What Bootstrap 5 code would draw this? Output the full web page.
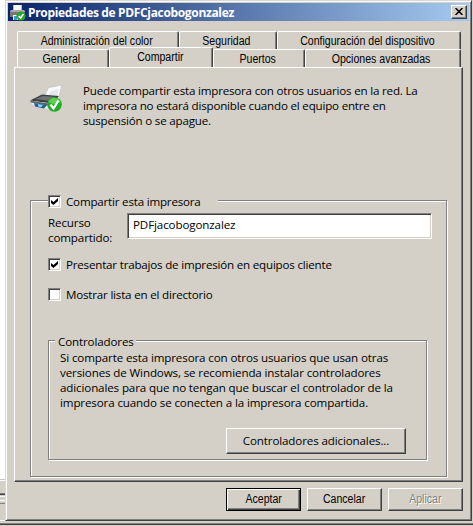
<!DOCTYPE html>
<html lang="es">
<head>
<meta charset="utf-8">
<title>Propiedades de PDFCjacobogonzalez</title>
<meta name="viewport" content="width=device-width, initial-scale=1">
<link href="https://cdn.jsdelivr.net/npm/bootstrap@5.3.0/dist/css/bootstrap.min.css" rel="stylesheet">
<style>
:root { --face:#d4d0c8; --shade:#808080; --dark:#404040; }
body { width:473px; height:526px; overflow:hidden; background:var(--face); color:#000;
  font:11.6px/15px "Open Sans","Noto Sans",sans-serif; }
.backdrop { width:5px; }
.backdrop .sheet { height:479px; background:#fff; }
.backdrop .rules { height:42px; background:linear-gradient(#c8c4bc 0 1px,#fff 1px 2px,var(--face) 2px 14px,var(--shade) 14px 15px,var(--dark) 15px 16px,var(--face) 16px 17px,#fff 17px 18px,var(--face) 18px 21px,#fff 21px 22px,var(--face) 22px 24px,var(--shade) 24px 25px,var(--face) 25px 41px,#fff 41px 42px); }
.floor { height:5px; background:linear-gradient(var(--face) 0 2px,var(--shade) 2px 3px,var(--dark) 3px 4px,var(--face) 4px); }
.dialog { width:467px; height:521px; background:var(--face); border:1px solid; border-color:#dcd8d0 var(--dark) var(--dark) #dcd8d0;
  box-shadow:inset 1px 1px #fff, inset -1px -1px var(--shade); padding:2px; }
.titlebar { height:18px; background:linear-gradient(90deg,#0a246a,#a6caf0); color:#fff; font-size:12px; font-weight:700; padding:0 2px 0 1px; }
.titlebar .caption { letter-spacing:-.34px; line-height:17px; margin-left:2px; }
.x-box { width:16px; height:14px; background:var(--face); border:1px solid; border-color:#fff var(--dark) var(--dark) #fff; box-shadow:inset -1px -1px var(--shade); }
.x-box svg { display:block; margin:2px 0 0 3px; }
.ms { font-family:"Liberation Sans",Arial,sans-serif; font-size:12px; }
.ms .narrow { display:inline-block; transform:scaleX(.88); white-space:nowrap; }
.strip { margin:10px 0 0 9px; width:444px; }
.tabitem { height:18px; padding:1px 3px 0 0; line-height:17px; display:flex; justify-content:center; border:1px solid; border-color:#fff var(--dark) transparent #fff; border-bottom:0; border-radius:2px 2px 0 0; box-shadow:inset -1px 0 var(--shade); background:var(--face); color:#000; }
.tabitem.chosen { height:20px; margin-top:-2px; padding-left:2px; }
.panel { width:449px; height:415px; margin-left:6px; border:1px solid; border-color:#fff var(--dark) var(--dark) #fff; box-shadow:inset -1px -1px var(--shade); padding:15px 0 0 15px; }
.intro { height:117px; }
.intro p { margin:0 0 0 20px; }
.etched { border:1px solid var(--shade); box-shadow:1px 1px #fff, inset 1px 1px #fff; }
.outer { width:417px; height:277px; padding-left:17px; }
.inner { width:379px; height:120px; margin-top:38px; padding-left:6px; }
.over { background:var(--face); width:max-content; }
.check { width:13px; height:13px; background:#fff; border:1px solid; border-color:var(--shade) #fff #fff var(--shade); box-shadow:inset 1px 1px var(--dark), inset -1px -1px var(--face); }
.check svg { display:block; margin:2px; }
.check + span { margin-left:5px; }
.field { width:305px; height:26px; background:#fff; border:1px solid; border-color:var(--shade) #fff #fff var(--shade); box-shadow:inset 1px 1px var(--dark), inset -1px -1px var(--face); padding:0 5px 4px; border-radius:0; font:inherit; color:#000; letter-spacing:-.12px; }
.t { letter-spacing:-.2px; white-space:nowrap; }
.t-wide { letter-spacing:-.13px; }
.push { border:1px solid; border-color:#fff var(--dark) var(--dark) #fff; box-shadow:inset -1px -1px var(--shade); border-radius:0; background:var(--face); color:#000; padding:0; font-size:12px; line-height:15px; }
.footer-row .push { width:75px; height:23px; }
.footer-row .default { border-color:#000; box-shadow:inset 1px 1px #fff, inset -1px -1px var(--dark), inset -2px -2px var(--shade); }
.footer-row .off { color:var(--shade); text-shadow:1px 1px #fff; }
.extra { width:180px; height:26px; margin:18px 0 0 171px; font-size:11.6px; padding-bottom:1px; }
</style>
</head>
<body>
<div class="d-flex">
  <div class="backdrop"><div class="sheet"></div><div class="rules"></div></div>
  <main class="dialog">
    <header class="titlebar d-flex align-items-center">
      <svg width="17" height="17" viewBox="0 0 17 17">
        <path d="M4 1h8v6H4z" fill="#f8f8f8"/><path d="M4 1h1v5H4zM12 1h1v5h-1z" fill="#bbb"/>
        <path d="M2 6h13l1 2v5H1V8z" fill="#777"/><path d="M2 6h13l1 2H1z" fill="#aaa"/>
        <path d="M4 11h8v5H4z" fill="#f4f4f4"/><path d="M5 12h3v4H5z" fill="#3a9bd2"/>
        <circle cx="12" cy="12" r="4.6" fill="#27a52b"/><path d="M9.5 12l2 2 3-4" fill="none" stroke="#fff" stroke-width="1.5"/>
      </svg>
      <span class="caption text-nowrap me-auto">Propiedades de PDFCjacobogonzalez</span>
      <div class="x-box"><svg width="8" height="7" viewBox="0 0 8 7"><path d="M.5 0l7 7M7.500 0l-7 7" stroke="#000" stroke-width="1.5"/></svg></div>
    </header>
    <nav class="strip ms">
      <div class="d-flex">
        <div class="tabitem" style="width:162px"><span class="narrow">Administración del color</span></div>
        <div class="tabitem" style="width:98px"><span class="narrow">Seguridad</span></div>
        <div class="tabitem" style="width:184px"><span class="narrow">Configuración del dispositivo</span></div>
      </div>
      <div class="d-flex">
        <div class="tabitem" style="width:92px"><span class="narrow">General</span></div>
        <div class="tabitem chosen" style="width:104px"><span class="narrow">Compartir</span></div>
        <div class="tabitem" style="width:92px"><span class="narrow">Puertos</span></div>
        <div class="tabitem" style="width:156px"><span class="narrow">Opciones avanzadas</span></div>
      </div>
    </nav>
    <section class="panel">
      <div class="intro d-flex">
        <svg width="33" height="34" viewBox="0 0 33 34">
          <path d="M18.500 4.500L32 2 28.500 15 14.500 13z" fill="#fafafa" stroke="#bbb" stroke-width=".7"/>
          <path d="M21 8l8-2-2 7-8-1z" fill="#e4e8ec"/>
          <path d="M0 17.500L12 11.500 29 13 22 21z" fill="#3c4042"/><path d="M5 16l8-3 13 1-6 4z" fill="#707476"/>
          <path d="M0 17.500l22 3 7-7v6l-10 7L3 22z" fill="#e9edf0"/><path d="M0 17.500l18 3v2L1 19.500z" fill="#5b6065"/>
          <path d="M4 20l13 2-3 3.500-9-2z" fill="#235f92"/><path d="M8 21l5 1-2 2.300-3-.8z" fill="#7fd0f2"/>
          <circle cx="24.500" cy="21.500" r="7.300" fill="#22ab25"/><path d="M18.500 19a6.500 6.500 0 0 1 12 0q-6 4-12 0" fill="#5fce55"/>
          <path d="M20.500 21.500l3 4 5-8" fill="none" stroke="#fff" stroke-width="2.300"/>
        </svg>
        <p class="t">Puede compartir esta impresora con otros usuarios en la red. La<br>impresora no estará disponible cuando el equipo entre en<br>suspensión o se apague.</p>
      </div>
      <div class="etched outer">
        <div class="over d-flex align-items-center t" style="margin-top:-7px;height:15px;width:170px"><span class="check"><svg width="7" height="7" viewBox="0 0 7 7"><path d="M0 2v3l2.500 2L7 3V0L2.500 4z"/></svg></span><span>Compartir esta impresora</span></div>
        <div class="d-flex">
          <label class="t t-wide" style="width:79px;padding-top:6px" for="share">Recurso<br>compartido:</label>
          <input id="share" class="field mt-1" value="PDFjacobogonzalez">
        </div>
        <div class="d-flex align-items-center t" style="margin-top:12px"><span class="check"><svg width="7" height="7" viewBox="0 0 7 7"><path d="M0 2v3l2.500 2L7 3V0L2.500 4z"/></svg></span><span>Presentar trabajos de impresión en equipos cliente</span></div>
        <div class="d-flex align-items-center t" style="margin-top:15px"><span class="check"></span><span>Mostrar lista en el directorio</span></div>
        <div class="etched inner">
          <div class="over t t-wide" style="margin-top:-7px;padding:0 2px 0 3px">Controladores</div>
          <div class="t t-wide" style="margin:1px 0 0 5px">Si comparte esta impresora con otros usuarios que usan otras<br>versiones de Windows, se recomienda instalar controladores<br>adicionales para que no tengan que buscar el controlador de la<br>impresora cuando se conecten a la impresora compartida.</div>
          <button class="btn push extra t t-wide d-block">Controladores adicionales...</button>
        </div>
      </div>
    </section>
    <div class="footer-row ms d-flex" style="gap:6px;margin:6px 0 0 218px">
      <button class="btn push default"><span class="narrow">Aceptar</span></button>
      <button class="btn push"><span class="narrow">Cancelar</span></button>
      <button class="btn push off"><span class="narrow">Aplicar</span></button>
    </div>
  </main>
</div>
<div class="floor"></div>
</body>
</html>
